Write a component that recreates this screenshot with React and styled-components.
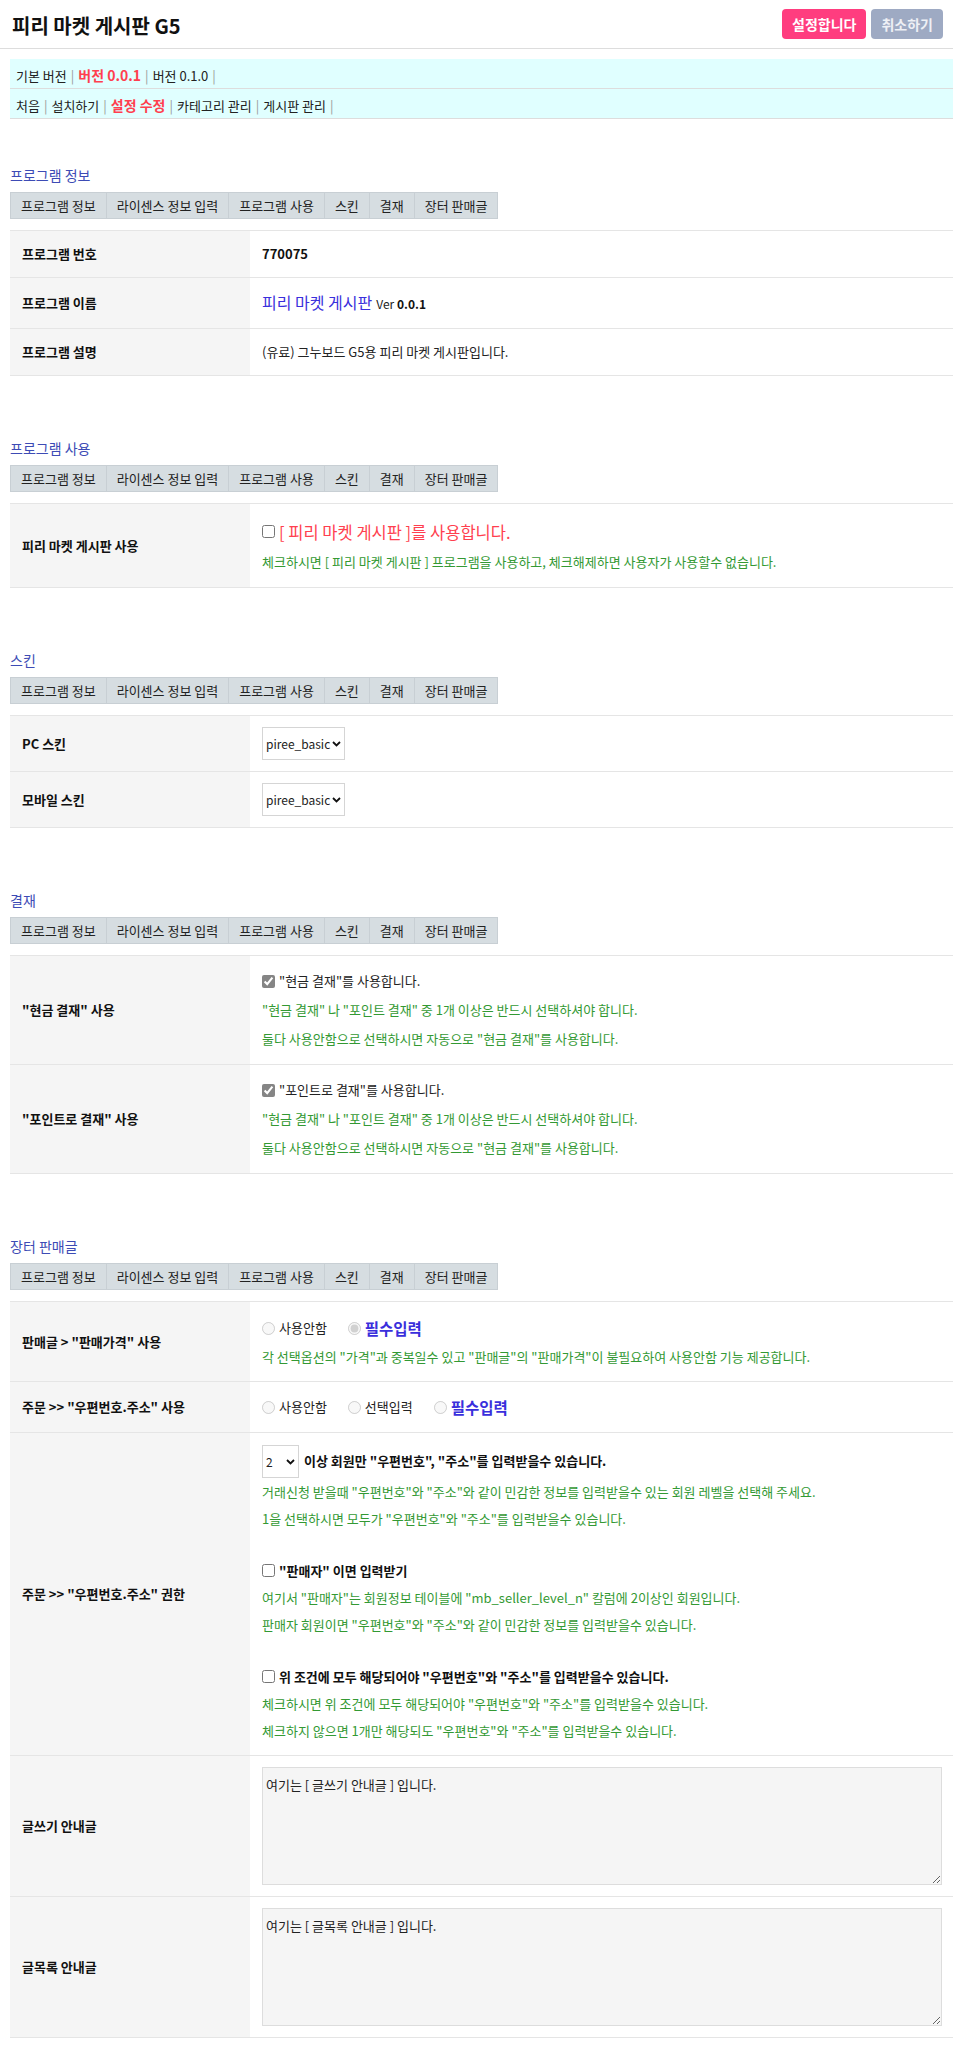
import React from 'react'
import styled, { createGlobalStyle } from 'styled-components'

const GlobalStyle = createGlobalStyle`
  body {
    margin: 0;
    background: #fff;
    color: #222;
    font-family: "Noto Sans CJK KR", "Noto Sans", sans-serif;
    font-size: 13px;
  }
`

const colorHelp = '#339933'
const colorRed = '#ff3f4f'
const colorBlue = '#3a2fdc'
const lineColor = '#e5e5e5'

const TopBar = styled.header`
  display: flex;
  align-items: center;
  justify-content: space-between;
  height: 48px;
  padding: 0 10px 0 12px;
  border-bottom: 1px solid #ddd;
`

const Title = styled.h1`
  margin: 0;
  padding-top: 3px;
  font-size: 20px;
  font-weight: bold;
  color: #111;
`

const Actions = styled.div`
  display: flex;
  gap: 5px;
`

const ActionButton = styled.button`
  height: 30px;
  padding: 0 10px;
  border: 0;
  border-radius: 4px;
  font-family: inherit;
  font-size: 14px;
  font-weight: bold;
  color: ${(p) => (p.$primary ? '#fff' : '#eef0f5')};
  background: ${(p) => (p.$primary ? '#ff3d7f' : '#9eaac3')};
`

const Page = styled.main`
  padding: 0 0 35px 10px;
`

const VersionBox = styled.nav`
  margin-top: 10px;
  background: #e0ffff;
`

const VersionRow = styled.div`
  padding: 6px 5px 2px 6px;
  line-height: 20px;
  border-bottom: 1px solid #ddd;
  color: #222;
`

const Sep = styled.span`
  margin: 0 4px;
  color: #999;
`

const Current = styled.span`
  font-size: 14px;
  font-weight: bold;
  color: ${colorRed};
`

const Section = styled.section`
  margin-top: 46px;

  & + & {
    margin-top: 62px;
  }
`

const Heading = styled.h2`
  margin: 0 0 7px;
  font-size: 14px;
  font-weight: normal;
  line-height: 20px;
  color: #3d4bb5;
`

const TabList = styled.ul`
  display: flex;
  width: max-content;
  margin: 0 0 11px;
  padding: 0;
  list-style: none;
  border: 1px solid #c8cfd4;
  background: #d6dde1;
`

const Tab = styled.li`
  padding: 0 10px;
  line-height: 25px;
  color: #222;

  & + & {
    border-left: 1px solid #c8cfd4;
  }
`

const FormTable = styled.table`
  width: 100%;
  border-collapse: collapse;
  border-top: 1px solid ${lineColor};
`

const Label = styled.th`
  box-sizing: border-box;
  width: 240px;
  padding: 11px 12px;
  background: #f5f5f5;
  border-bottom: 1px solid ${lineColor};
  text-align: left;
  vertical-align: middle;
  font-weight: bold;
  line-height: 24px;
  color: #111;
`

const Value = styled.td`
  padding: 11px 11px 11px 12px;
  border-bottom: 1px solid ${lineColor};
  vertical-align: middle;
  line-height: ${(p) => p.$lh || 24}px;
  color: #222;
`

const Strong = styled.b`
  color: #111;
`

const ProgramName = styled.span`
  margin-right: 4px;
  font-size: 16px;
  color: ${colorBlue};
`

const Version = styled.span`
  font-size: 12px;
`

const ControlLine = styled.div`
  display: flex;
  align-items: center;
  min-height: ${(p) => p.$h || 28}px;
`

const Help = styled.div`
  line-height: ${(p) => p.$h || 28}px;
  color: ${colorHelp};
`

const Gap = styled.div`
  height: ${(p) => p.$h}px;
`

const Check = styled.input.attrs({ type: 'checkbox' })`
  width: 13px;
  height: 13px;
  margin: 0 4px 0 0;
  accent-color: #858585;
`

const Radio = styled.input.attrs({ type: 'radio' })`
  width: 13px;
  height: 13px;
  margin: 0 4px 0 0;
`

const RadioItem = styled.label`
  display: inline-flex;
  align-items: center;
  margin-right: 21px;
`

const RadioText = styled.span`
  font-size: ${(p) => (p.$strong ? '15.5px' : '13px')};
  font-weight: ${(p) => (p.$strong ? 'bold' : 'normal')};
  color: ${(p) => (p.$strong ? colorBlue : '#222')};
`

const LeadText = styled.span`
  font-size: 16.5px;
  color: ${colorRed};
`

const SelectBox = styled.span`
  position: relative;
  display: inline-block;
  width: ${(p) => p.$w}px;
  height: 33px;
`

const Select = styled.select`
  appearance: none;
  box-sizing: border-box;
  width: 100%;
  height: 100%;
  padding: 0 0 0 3px;
  border: 1px solid #d5d5d5;
  border-radius: 0;
  background: #fff;
  font-family: inherit;
  font-size: 12px;
  color: #222;
`

const Chevron = styled.svg`
  position: absolute;
  top: 14px;
  right: 4px;
  width: 9px;
  height: 6px;
  pointer-events: none;
`

const SelectNote = styled.b`
  margin-left: 5px;
  color: #111;
`

const Textarea = styled.textarea`
  display: block;
  box-sizing: border-box;
  width: 100%;
  height: 118px;
  padding: 7px 3px;
  border: 1px solid #ddd;
  background: #f5f5f5;
  font-family: inherit;
  font-size: 13px;
  line-height: 20px;
  color: #222;
`

const tabs = ['프로그램 정보', '라이센스 정보 입력', '프로그램 사용', '스킨', '결재', '장터 판매글']
const levels = [1, 2, 3, 4, 5, 6, 7, 8, 9, 10]

const Tabs = () => (
  <TabList>
    {tabs.map((t) => (
      <Tab key={t}>{t}</Tab>
    ))}
  </TabList>
)

const Links = ({ items }) => (
  <VersionRow>
    {items.map((it) => (
      <React.Fragment key={it.text}>
        {it.current ? <Current>{it.text}</Current> : it.text}
        <Sep>|</Sep>
      </React.Fragment>
    ))}
  </VersionRow>
)

const Dropdown = ({ width, value, options }) => (
  <SelectBox $w={width}>
    <Select defaultValue={value}>
      {options.map((o) => (
        <option key={o} value={o}>{o}</option>
      ))}
    </Select>
    <Chevron viewBox="0 0 9 6">
      <path d="M1 1 L4.5 4.5 L8 1" fill="none" stroke="#111" strokeWidth="1.8" />
    </Chevron>
  </SelectBox>
)

const PayRow = ({ label, check }) => (
  <tr>
    <Label>{label}</Label>
    <Value>
      <ControlLine $h={28}>
        <Check defaultChecked />
        {check}
      </ControlLine>
      <Help $h={29}>"현금 결재" 나 "포인트 결재" 중 1개 이상은 반드시 선택하셔야 합니다.</Help>
      <Help $h={29}>둘다 사용안함으로 선택하시면 자동으로 "현금 결재"를 사용합니다.</Help>
    </Value>
  </tr>
)

export default function App() {
  return (
    <>
      <GlobalStyle />
      <TopBar>
        <Title>피리 마켓 게시판 G5</Title>
        <Actions>
          <ActionButton type="button" $primary>설정합니다</ActionButton>
          <ActionButton type="button">취소하기</ActionButton>
        </Actions>
      </TopBar>

      <Page>
        <VersionBox>
          <Links
            items={[
              { text: '기본 버전' },
              { text: '버전 0.0.1', current: true },
              { text: '버전 0.1.0' },
            ]}
          />
          <Links
            items={[
              { text: '처음' },
              { text: '설치하기' },
              { text: '설정 수정', current: true },
              { text: '카테고리 관리' },
              { text: '게시판 관리' },
            ]}
          />
        </VersionBox>

        <Section>
          <Heading>프로그램 정보</Heading>
          <Tabs />
          <FormTable>
            <tbody>
              <tr>
                <Label>프로그램 번호</Label>
                <Value><Strong>770075</Strong></Value>
              </tr>
              <tr>
                <Label>프로그램 이름</Label>
                <Value $lh={26}>
                  <ProgramName>피리 마켓 게시판</ProgramName>
                  <Version>Ver <Strong>0.0.1</Strong></Version>
                </Value>
              </tr>
              <tr>
                <Label>프로그램 설명</Label>
                <Value>(유료) 그누보드 G5용 피리 마켓 게시판입니다.</Value>
              </tr>
            </tbody>
          </FormTable>
        </Section>

        <Section>
          <Heading>프로그램 사용</Heading>
          <Tabs />
          <FormTable>
            <tbody>
              <tr>
                <Label>피리 마켓 게시판 사용</Label>
                <Value>
                  <ControlLine $h={33}>
                    <Check />
                    <LeadText>[ 피리 마켓 게시판 ]를 사용합니다.</LeadText>
                  </ControlLine>
                  <Help>
                    체크하시면 [ 피리 마켓 게시판 ] 프로그램을 사용하고, 체크해제하면 사용자가 사용할수 없습니다.
                  </Help>
                </Value>
              </tr>
            </tbody>
          </FormTable>
        </Section>

        <Section>
          <Heading>스킨</Heading>
          <Tabs />
          <FormTable>
            <tbody>
              <tr>
                <Label>PC 스킨</Label>
                <Value>
                  <ControlLine $h={33}>
                    <Dropdown width={83} value="piree_basic" options={['piree_basic']} />
                  </ControlLine>
                </Value>
              </tr>
              <tr>
                <Label>모바일 스킨</Label>
                <Value>
                  <ControlLine $h={33}>
                    <Dropdown width={83} value="piree_basic" options={['piree_basic']} />
                  </ControlLine>
                </Value>
              </tr>
            </tbody>
          </FormTable>
        </Section>

        <Section>
          <Heading>결재</Heading>
          <Tabs />
          <FormTable>
            <tbody>
              <PayRow label={'"현금 결재" 사용'} check={'"현금 결재"를 사용합니다.'} />
              <PayRow label={'"포인트로 결재" 사용'} check={'"포인트로 결재"를 사용합니다.'} />
            </tbody>
          </FormTable>
        </Section>

        <Section>
          <Heading>장터 판매글</Heading>
          <Tabs />
          <FormTable>
            <tbody>
              <tr>
                <Label>판매글 &gt; "판매가격" 사용</Label>
                <Value>
                  <ControlLine $h={30}>
                    <RadioItem>
                      <Radio name="price" disabled />
                      <RadioText>사용안함</RadioText>
                    </RadioItem>
                    <RadioItem>
                      <Radio name="price" disabled defaultChecked />
                      <RadioText $strong>필수입력</RadioText>
                    </RadioItem>
                  </ControlLine>
                  <Help $h={27}>
                    각 선택옵션의 "가격"과 중복일수 있고 "판매글"의 "판매가격"이 불필요하여 사용안함 기능 제공합니다.
                  </Help>
                </Value>
              </tr>
              <tr>
                <Label>주문 &gt;&gt; "우편번호.주소" 사용</Label>
                <Value>
                  <ControlLine $h={28}>
                    <RadioItem>
                      <Radio name="addr" disabled />
                      <RadioText>사용안함</RadioText>
                    </RadioItem>
                    <RadioItem>
                      <Radio name="addr" disabled />
                      <RadioText>선택입력</RadioText>
                    </RadioItem>
                    <RadioItem>
                      <Radio name="addr" disabled />
                      <RadioText $strong>필수입력</RadioText>
                    </RadioItem>
                  </ControlLine>
                </Value>
              </tr>
              <tr>
                <Label>주문 &gt;&gt; "우편번호.주소" 권한</Label>
                <Value>
                  <ControlLine $h={34}>
                    <Dropdown width={37} value={2} options={levels} />
                    <SelectNote>이상 회원만 "우편번호", "주소"를 입력받을수 있습니다.</SelectNote>
                  </ControlLine>
                  <Help $h={27}>
                    거래신청 받을때 "우편번호"와 "주소"와 같이 민감한 정보를 입력받을수 있는 회원 레벨을 선택해 주세요.
                  </Help>
                  <Help $h={27}>1을 선택하시면 모두가 "우편번호"와 "주소"를 입력받을수 있습니다.</Help>
                  <Gap $h={25} />
                  <ControlLine $h={27}>
                    <Check />
                    <Strong>"판매자" 이면 입력받기</Strong>
                  </ControlLine>
                  <Help $h={27}>
                    여기서 "판매자"는 회원정보 테이블에 "mb_seller_level_n" 칼럼에 2이상인 회원입니다.
                  </Help>
                  <Help $h={27}>판매자 회원이면 "우편번호"와 "주소"와 같이 민감한 정보를 입력받을수 있습니다.</Help>
                  <Gap $h={25} />
                  <ControlLine $h={27}>
                    <Check />
                    <Strong>위 조건에 모두 해당되어야 "우편번호"와 "주소"를 입력받을수 있습니다.</Strong>
                  </ControlLine>
                  <Help $h={27}>체크하시면 위 조건에 모두 해당되어야 "우편번호"와 "주소"를 입력받을수 있습니다.</Help>
                  <Help $h={27}>체크하지 않으면 1개만 해당되도 "우편번호"와 "주소"를 입력받을수 있습니다.</Help>
                </Value>
              </tr>
              <tr>
                <Label>글쓰기 안내글</Label>
                <Value>
                  <Textarea defaultValue="여기는 [ 글쓰기 안내글 ] 입니다." />
                </Value>
              </tr>
              <tr>
                <Label>글목록 안내글</Label>
                <Value>
                  <Textarea defaultValue="여기는 [ 글목록 안내글 ] 입니다." />
                </Value>
              </tr>
            </tbody>
          </FormTable>
        </Section>
      </Page>
    </>
  )
}
